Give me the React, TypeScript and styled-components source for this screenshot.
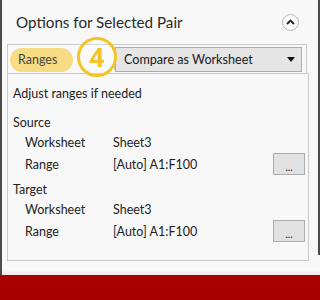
import React from "react";
import styled, { createGlobalStyle } from "styled-components";

const GlobalStyle = createGlobalStyle`
  html, body { margin: 0; padding: 0; background: #f8f8f8; }
  body { font-family: Lato, "Open Sans", Arial, sans-serif; color: #222; }
  *, *::before, *::after { box-sizing: border-box; }
`;

const Frame = styled.div`
  width: 320px;
  height: 300px;
  display: flex;
  flex-direction: column;
  overflow: hidden;
`;

const Window = styled.div`
  height: 275px;
  display: flex;
  border-left: 2px solid #4b4b4b;
  background: linear-gradient(to bottom, #f8f8f8 0, #f8f8f8 270px, #f3e6e6 275px);
`;

const Main = styled.div`
  flex: 1;
  display: flex;
  flex-direction: column;
`;

const RightEdge = styled.div`
  width: 2px;
  height: 255px;
  background: #4b4b4b;
`;

const Header = styled.div`
  height: 44px;
  display: flex;
  align-items: center;
  justify-content: space-between;
  padding: 0 19px 0 14px;
`;

const Title = styled.div`
  font-size: 15.2px;
  color: #2a2a2a;
`;

const Collapse = styled.button`
  width: 17px;
  height: 17px;
  border-radius: 50%;
  border: 1px solid #b9b9b9;
  background: #fbfbfb;
  padding: 0;
  display: flex;
  align-items: center;
  justify-content: center;
`;

const Group = styled.div`
  margin-left: 5px;
  width: 302px;
  display: flex;
  flex-direction: column;
`;

const TabStrip = styled.div`
  position: relative;
  width: 300px;
  height: 29px;
  border: 1px solid #cacaca;
  border-bottom: none;
  display: flex;
  align-items: center;
  padding: 1px 4px 0 2px;
`;

const Pill = styled.div`
  width: 63px;
  height: 24px;
  border-radius: 12px;
  background: #f8dc84;
  color: #444;
  font-size: 12.5px;
  display: flex;
  align-items: center;
  padding-left: 8px;
`;

const StepBadge = styled.div`
  position: absolute;
  left: 69px;
  top: -8px;
  width: 40px;
  height: 40px;
  border: 3px solid #f2c526;
  border-radius: 50%;
  color: #f2c526;
  font-family: "Open Sans", Arial, sans-serif;
  font-weight: 700;
  font-size: 26px;
  line-height: 1;
  display: flex;
  align-items: center;
  justify-content: center;
  background: rgba(255, 255, 255, 0.25);
  z-index: 2;
`;

const Select = styled.div`
  margin-left: auto;
  width: 187px;
  height: 25px;
  border: 1px solid #acacac;
  background: #e5e5e5;
  display: flex;
  align-items: center;
  justify-content: space-between;
  padding: 0 6px 0 8px;
  font-size: 12.6px;
  color: #1a1a1a;
  box-shadow: -3px 0 0 -2px #c8c8c8;
`;

const Body = styled.div`
  height: 188px;
  border: 1px solid #cacaca;
  display: flex;
  flex-direction: column;
  padding: 9px 3px 0 5px;
`;

const Line = styled.div<{ $gap?: number }>`
  height: 20px;
  display: flex;
  align-items: center;
  font-size: 12.5px;
  margin-bottom: ${(p) => p.$gap ?? 0}px;
`;

const Section = styled.div`
  display: flex;
  flex-direction: column;
  margin-bottom: 3px;
`;

const Row = styled.div<{ $tall?: boolean }>`
  height: ${(p) => (p.$tall ? 24 : 20)}px;
  display: flex;
  align-items: center;
  font-size: 12.5px;
  padding-left: 12px;
`;

const Label = styled.span`
  width: 88px;
`;

const Value = styled.span`
  flex: 1;
`;

const DotsButton = styled.button`
  width: 32px;
  height: 22px;
  border: 1px solid #adadad;
  background: #e1e1e1;
  font-family: inherit;
  font-size: 10px;
  font-weight: 700;
  color: #333;
  padding: 5px 0 0;
  line-height: 1;
`;

const Footer = styled.div`
  height: 25px;
  background: #a60000;
`;

function RangeSection({ title, sheet, range }: { title: string; sheet: string; range: string }) {
  return (
    <Section>
      <Line>{title}</Line>
      <Row>
        <Label>Worksheet</Label>
        <Value>{sheet}</Value>
      </Row>
      <Row $tall>
        <Label>Range</Label>
        <Value>{range}</Value>
        <DotsButton>...</DotsButton>
      </Row>
    </Section>
  );
}

export default function App() {
  return (
    <Frame>
      <GlobalStyle />
      <Window>
        <Main>
          <Header>
            <Title>Options for Selected Pair</Title>
            <Collapse aria-label="Collapse">
              <svg width="9" height="6" viewBox="0 0 9 6">
                <path d="M1 5 L4.5 1.5 L8 5" fill="none" stroke="#222" strokeWidth="1.8" />
              </svg>
            </Collapse>
          </Header>
          <Group>
            <TabStrip>
              <Pill>Ranges</Pill>
              <StepBadge>4</StepBadge>
              <Select>
                <span>Compare as Worksheet</span>
                <svg width="8" height="5" viewBox="0 0 8 5">
                  <path d="M0 0 H8 L4 5 Z" fill="#111" />
                </svg>
              </Select>
            </TabStrip>
            <Body>
              <Line $gap={9}>Adjust ranges if needed</Line>
              <RangeSection title="Source" sheet="Sheet3" range="[Auto] A1:F100" />
              <RangeSection title="Target" sheet="Sheet3" range="[Auto] A1:F100" />
            </Body>
          </Group>
        </Main>
        <RightEdge />
      </Window>
      <Footer />
    </Frame>
  );
}
